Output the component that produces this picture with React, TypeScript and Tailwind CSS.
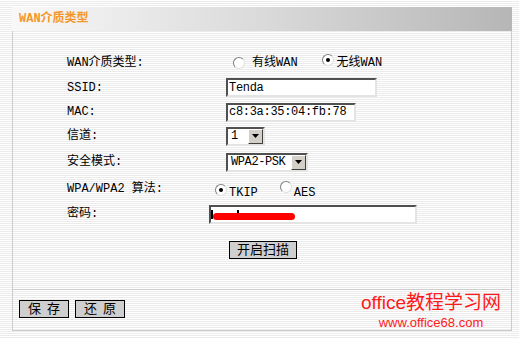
import React from "react"

const mono = { fontFamily: '"Liberation Mono", "Noto Sans CJK SC", monospace' }

function Radio({ checked }: { checked?: boolean }) {
    return (
        <span className="relative inline-block w-[12px] h-[12px] rounded-full border border-[#808080] border-b-[#e0e0e0] border-r-[#e0e0e0] bg-white shrink-0">
            {checked && <span className="absolute left-[3px] top-[3px] w-[4px] h-[4px] rounded-full bg-black" />}
        </span>
    )
}

function Field({ value, width }: { value: string; width: string }) {
    return (
        <div className={`${width} h-[19px] bg-white border-2 border-t-[#505050] border-l-[#505050] border-b-[#e4e4e4] border-r-[#e4e4e4] flex items-center pl-[1px] text-[12px] tracking-[-0.3px] text-black whitespace-nowrap overflow-hidden`}>
            {value}
        </div>
    )
}

function Select({ value, width }: { value: string; width: string }) {
    return (
        <div className={`${width} h-[19px] bg-white border-2 border-t-[#505050] border-l-[#505050] border-b-[#e4e4e4] border-r-[#e4e4e4] flex items-center justify-between text-[12px] tracking-[-0.4px] text-black`}>
            <span className="pl-[3px] whitespace-nowrap">{value}</span>
            <span className="w-[15px] h-[15px] bg-[#d4d0c8] border border-t-white border-l-white border-b-[#404040] border-r-[#404040] flex items-center justify-center shrink-0">
                <svg width="7" height="4" viewBox="0 0 7 4"><path d="M0 0h7L3.5 4z" fill="#000" /></svg>
            </span>
        </div>
    )
}

function Row({ label, h, children }: { label: string; h: string; children: React.ReactNode }) {
    return (
        <div className={`flex items-center ${h}`}>
            <div className="w-[142px] pl-[54px] box-content text-[12px] text-black">{label}</div>
            {children}
        </div>
    )
}

export default function App() {
    return (
        <div
            className="w-[519px] h-[339px] bg-[repeating-linear-gradient(to_bottom,#ffffff_0px,#ffffff_1px,#ebebeb_1px,#ebebeb_2px)] pt-[7px] pl-[12px] overflow-hidden"
            style={mono}
        >
            <div className="w-[500px] h-[24px] bg-[linear-gradient(to_right,#f8f8f8,#dadada_50%,#b6b6b6)] flex items-center pl-[7px]">
                <span className="text-[12px] font-bold text-[#f5962a]">WAN介质类型</span>
            </div>
            <div className="w-[500px] border-l border-r border-b border-[#cccccc]">
                <div className="pt-[19px] h-[258px]">
                    <Row label="WAN介质类型:" h="h-[25px]">
                        <div className="flex items-center ml-[24px] text-[12px]">
                            <Radio />
                            <span className="ml-[7px]">有线WAN</span>
                            <span className="ml-[24px]"><Radio checked /></span>
                            <span className="ml-[3px]">无线WAN</span>
                        </div>
                    </Row>
                    <Row label="SSID:" h="h-[25px]">
                        <div className="ml-[17px]"><Field value="Tenda" width="w-[151px]" /></div>
                    </Row>
                    <Row label="MAC:" h="h-[24px]">
                        <div className="ml-[17px]"><Field value="c8:3a:35:04:fb:78" width="w-[130px]" /></div>
                    </Row>
                    <Row label="信道:" h="h-[24px]">
                        <div className="ml-[17px]"><Select value="1" width="w-[39px]" /></div>
                    </Row>
                    <Row label="安全模式:" h="h-[28px]">
                        <div className="ml-[17px]"><Select value="WPA2-PSK" width="w-[82px]" /></div>
                    </Row>
                    <Row label="WPA/WPA2 算法:" h="h-[26px]">
                        <div className="flex items-center ml-[6px] text-[12px] pt-[2px]">
                            <Radio checked />
                            <span className="ml-[2px] translate-y-[3px]">TKIP</span>
                            <span className="ml-[22px]"><Radio /></span>
                            <span className="ml-[2px] translate-y-[3px]">AES</span>
                        </div>
                    </Row>
                    <Row label="密码:" h="h-[24px]">
                        <div className="relative">
                            <Field value="" width="w-[208px]" />
                            <span className="absolute left-[2px] top-[5px] w-[2px] h-[9px] bg-black" />
                            <span className="absolute left-[28px] top-[5px] w-[2px] h-[6px] bg-black" />
                            <span className="absolute left-[4px] top-[8px] w-[82px] h-[7px] rounded-full bg-[#ff0000]" />
                        </div>
                    </Row>
                    <div className="flex pl-[216px] pt-[15px]">
                        <button className="w-[68px] h-[18px] bg-[#cfcfcf] border border-black text-[13px] leading-none text-black">开启扫描</button>
                    </div>
                </div>
                <div className="border-t border-[#cccccc] h-[41px] flex items-start justify-between pl-[6px] pr-[10px]">
                    <div className="flex gap-[6px] pt-[10px]">
                        <button className="w-[50px] h-[18px] bg-[#cfcfcf] border border-black text-[13px] leading-none text-black tracking-[6px] pl-[6px]">保存</button>
                        <button className="w-[50px] h-[18px] bg-[#cfcfcf] border border-black text-[13px] leading-none text-black tracking-[6px] pl-[6px]">还原</button>
                    </div>
                    <div className="flex flex-col items-center text-[#ff1a1a] pt-[2px]" style={{ fontFamily: '"Liberation Sans", "Noto Sans CJK SC", sans-serif' }}>
                        <span className="text-[19px] leading-[22px]">office教程学习网</span>
                        <span className="text-[13px] leading-[16px] mt-[1px]">www.office68.com</span>
                    </div>
                </div>
            </div>
        </div>
    )
}
